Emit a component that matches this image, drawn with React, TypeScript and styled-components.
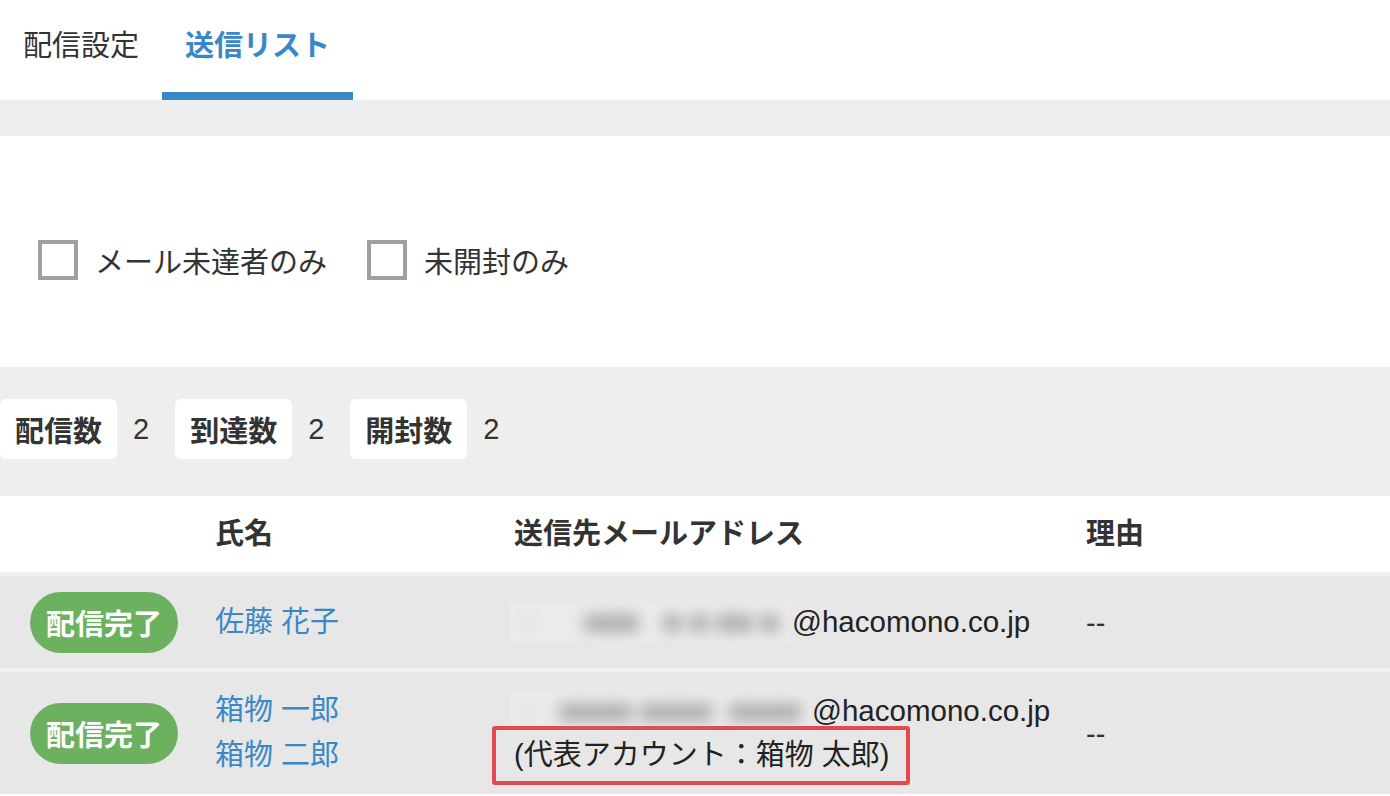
import React from "react";
import styled, { createGlobalStyle } from "styled-components";

const Global = createGlobalStyle`
  html, body { margin: 0; padding: 0; background: #ffffff; }
  body {
    font-family: "Liberation Sans", "Noto Sans CJK JP", sans-serif;
    color: #333333;
    -webkit-font-smoothing: antialiased;
  }
  * { box-sizing: border-box; }
`;

const BLUE = "#3a87c8";

const Page = styled.div`
  width: 1390px;
  min-height: 796px;
  overflow: hidden;
`;

const TabBar = styled.nav`
  display: flex;
  height: 100px;
  background: #ffffff;
`;

const Tab = styled.div<{ $active?: boolean }>`
  display: flex;
  align-items: center;
  padding: 0 23px 6px 23px;
  font-size: 29px;
  color: ${(p) => (p.$active ? BLUE : "#333333")};
  border-bottom: 8px solid ${(p) => (p.$active ? BLUE : "transparent")};
  font-weight: ${(p) => (p.$active ? 600 : 400)};
`;

const GrayBand = styled.div<{ $h: number }>`
  height: ${(p) => p.$h}px;
  background: #eeeeee;
`;

const FilterSection = styled.section`
  height: 231px;
  display: flex;
  align-items: center;
  gap: 40px;
  padding: 16px 0 0 38px;
`;

const CheckItem = styled.label`
  display: flex;
  align-items: center;
  gap: 17px;
  font-size: 29px;
  color: #333333;
`;

const CheckBox = styled.span`
  display: inline-block;
  width: 40px;
  height: 40px;
  border: 4px solid #a0a0a0;
  background: #ffffff;
`;

const StatsBand = styled.section`
  height: 129px;
  background: #eeeeee;
  display: flex;
  align-items: flex-start;
  padding-top: 32px;
`;

const StatLabel = styled.span`
  display: flex;
  align-items: center;
  height: 60px;
  padding: 0 15px 0 15px;
  background: #ffffff;
  border-radius: 6px;
  font-size: 29px;
  font-weight: 700;
  color: #333333;
`;

const StatValue = styled.span`
  display: flex;
  align-items: center;
  height: 60px;
  margin: 0 26px 0 16px;
  font-size: 29px;
  color: #333333;
`;

const Table = styled.div`
  display: flex;
  flex-direction: column;
  gap: 4px;
  background: #f0f0f0;
`;

const Grid = styled.div`
  display: grid;
  grid-template-columns: 215px 295px 576px 1fr;
  align-items: center;
`;

const HeaderRow = styled(Grid)`
  height: 76px;
  padding-bottom: 6px;
  background: #ffffff;
  font-size: 29px;
  font-weight: 700;
  color: #333333;
`;

const HeaderCell = styled.div<{ $pl?: number }>`
  padding-left: ${(p) => p.$pl ?? 0}px;
`;

const BodyRow = styled(Grid)<{ $pad: number }>`
  min-height: 92px;
  padding: ${(p) => p.$pad}px 0;
  background: #e7e7e7;
  font-size: 29px;
`;

const BadgeCell = styled.div`
  padding-left: 30px;
`;

const Badge = styled.span`
  display: flex;
  align-items: center;
  justify-content: center;
  width: 148px;
  height: 61px;
  border-radius: 31px;
  background: #6cb160;
  color: #ffffff;
  font-weight: 700;
  font-size: 29px;
`;

const Names = styled.div`
  display: flex;
  flex-direction: column;
  line-height: 45px;
  color: ${BLUE};
`;

const EmailCell = styled.div`
  display: flex;
  flex-direction: column;
  align-items: flex-start;
`;

const EmailLine = styled.div`
  display: flex;
  align-items: center;
  height: 44px;
  color: #222222;
  font-size: 29.5px;
`;

const Blurred = styled.span<{ $w: number; $h: number }>`
  display: inline-flex;
  align-items: center;
  width: ${(p) => p.$w}px;
  height: ${(p) => p.$h}px;
  background: #ebebeb;
  overflow: hidden;
  margin-right: 2px;
`;

const BlurInk = styled.span`
  filter: blur(8px);
  color: #8e8e8e;
  font-size: 30px;
  font-weight: 700;
  white-space: pre;
  padding-left: 14px;
`;

const Annotation = styled.div`
  margin: -7px 0 -8px -18px;
  padding: 7px 17px 8px 18px;
  border: 4px solid #e34a4f;
  border-radius: 3px;
  line-height: 36px;
  color: #222222;
`;

const Reason = styled.div`
  color: #333333;
  padding-top: 2px;
`;

export default function App() {
  return (
    <Page>
      <Global />
      <TabBar>
        <Tab>配信設定</Tab>
        <Tab $active>送信リスト</Tab>
      </TabBar>
      <GrayBand $h={36} />
      <FilterSection>
        <CheckItem>
          <CheckBox />
          メール未達者のみ
        </CheckItem>
        <CheckItem>
          <CheckBox />
          未開封のみ
        </CheckItem>
      </FilterSection>
      <StatsBand>
        <StatLabel>配信数</StatLabel>
        <StatValue>2</StatValue>
        <StatLabel>到達数</StatLabel>
        <StatValue>2</StatValue>
        <StatLabel>開封数</StatLabel>
        <StatValue>2</StatValue>
      </StatsBand>
      <Table>
        <HeaderRow>
          <HeaderCell />
          <HeaderCell>氏名</HeaderCell>
          <HeaderCell $pl={4}>送信先メールアドレス</HeaderCell>
          <HeaderCell>理由</HeaderCell>
        </HeaderRow>
        <BodyRow $pad={0}>
          <BadgeCell>
            <Badge>配信完了</Badge>
          </BadgeCell>
          <Names>
            <span>佐藤 花子</span>
          </Names>
          <EmailCell>
            <EmailLine>
              <Blurred $w={280} $h={41}>
                <BlurInk>{"·      ■■■   ■ ■ ■■ ■"}</BlurInk>
              </Blurred>
              @hacomono.co.jp
            </EmailLine>
          </EmailCell>
          <Reason>--</Reason>
        </BodyRow>
        <BodyRow $pad={16}>
          <BadgeCell>
            <Badge>配信完了</Badge>
          </BadgeCell>
          <Names>
            <span>箱物 一郎</span>
            <span>箱物 二郎</span>
          </Names>
          <EmailCell>
            <EmailLine>
              <Blurred $w={300} $h={38}>
                <BlurInk>{"·   ■■■■ ■■■■  ■■■■"}</BlurInk>
              </Blurred>
              @hacomono.co.jp
            </EmailLine>
            <Annotation>(代表アカウント：箱物 太郎)</Annotation>
          </EmailCell>
          <Reason>--</Reason>
        </BodyRow>
      </Table>
    </Page>
  );
}
